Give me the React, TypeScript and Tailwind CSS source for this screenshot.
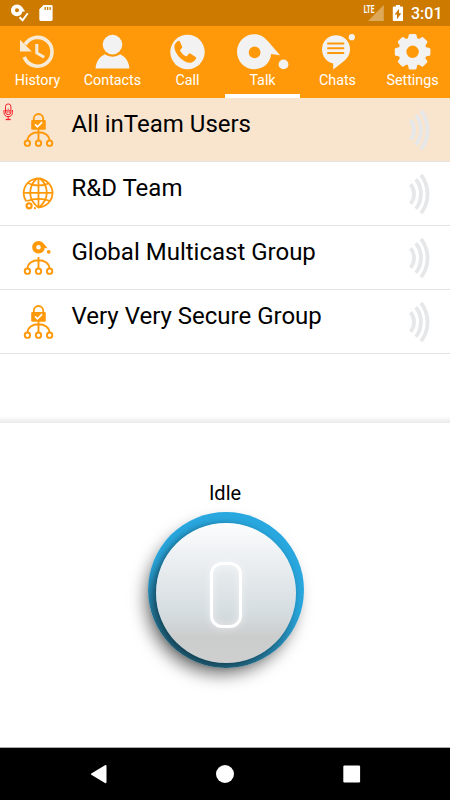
import type { ReactNode } from "react";
import clsx from "clsx";

const TABS = [
  { label: "History", icon: <HistoryIcon /> },
  { label: "Contacts", icon: <ContactsIcon /> },
  { label: "Call", icon: <CallIcon /> },
  { label: "Talk", icon: <TalkIcon /> },
  { label: "Chats", icon: <ChatsIcon /> },
  { label: "Settings", icon: <SettingsIcon /> },
];

type GroupKind = "secure" | "global" | "multicast";

const GROUPS: { name: string; kind: GroupKind }[] = [
  { name: "All inTeam Users", kind: "secure" },
  { name: "R&D Team", kind: "global" },
  { name: "Global Multicast Group", kind: "multicast" },
  { name: "Very Very Secure Group", kind: "secure" },
];

// Tab icons share a 75x46 canvas, the width of one tab
function TabSvg({ children }: { children: ReactNode }) {
  return (
    <svg width="75" height="46" viewBox="0 0 75 46" fill="#f2f2f2" className="block shrink-0">
      {children}
    </svg>
  );
}

function HistoryIcon() {
  return (
    <TabSvg>
      <g fill="none" stroke="#f7ead6" strokeWidth="3.6">
        <path d="M25.2 18.5A14.4 14.4 0 1 1 24.2 31" />
        <path d="M36.8 18v9l7.4 4.200" strokeWidth="3" />
      </g>
      <path d="M20 13.800v11.600h11.800z" fill="#f7ead6" />
    </TabSvg>
  );
}

function ContactsIcon() {
  return (
    <TabSvg>
      <circle cx="37.5" cy="18.6" r="9.8" />
      <path d="M20.6 42.500c.4-6.400 3.400-11.400 9.200-14.200 4.900 3.100 10.600 3.100 15.400 0 5.800 2.800 8.800 7.800 9.200 14.200z" />
    </TabSvg>
  );
}

function CallIcon() {
  return (
    <TabSvg>
      <circle cx="37.5" cy="26" r="17.2" />
      <path
        fill="#ff9909"
        d="M28.7 14.8c-1.200.3-3.700 2.400-4.200 4.500-.8 3.300 1.500 8.400 5.100 12.100 3.600 3.600 8.500 6.100 12 5.100 2-.5 4.100-3 4.500-4.300.1-.5-.1-.9-.5-1.200l-5.300-3.400c-.5-.3-1.100-.2-1.500.2l-1.800 2.100c-.4.4-1 .5-1.500.2-2-1.100-3.900-3-5.200-5.100-.3-.5-.2-1 .2-1.400l1.400-1.700c.4-.4.5-1 .2-1.500l-2.300-5.100c-.2-.4-.6-.6-1.100-.5z"
      />
    </TabSvg>
  );
}

function TalkIcon() {
  return (
    <TabSvg>
      <path
        fillRule="evenodd"
        d="M29.2 8.200c6 0 10 2.700 13.300 6.600L55 29.200l-8.900-1.100C45.400 37 38.400 43.200 29.400 43.200 19.700 43.200 12 35.500 12 25.700S19.700 8.200 29.200 8.200zm.4 12.200a5.900 5.900 0 1 0 0 11.800 5.900 5.900 0 0 0 0-11.800z"
      />
      <circle cx="58.5" cy="38.4" r="4.9" />
    </TabSvg>
  );
}

function ChatsIcon() {
  return (
    <TabSvg>
      <path d="M36 9.200a14 14 0 0 1 14 14c0 5.400-2.800 9.300-6.600 12.300L33.200 43.500v-6.100C26.500 36.100 22 30.200 22 23.200a14 14 0 0 1 14-14z" />
      <circle cx="51.8" cy="11.200" r="3.100" />
      <path d="M28 17.600h15.400M28 22.300h15.400M28 27h15.400" stroke="#ff9909" strokeWidth="2" strokeLinecap="round" />
    </TabSvg>
  );
}

function SettingsIcon() {
  return (
    <TabSvg>
      <g transform="translate(37.6 25.8)">
        {[0, 45, 90, 135, 180, 225, 270, 315].map((deg) => (
          <path
            key={deg}
            transform={`rotate(${deg})`}
            d="M-5-11.500-3.900-16.800q.3-1 1.300-1h5.200q1 0 1.300 1L5-11.500z"
          />
        ))}
        <circle r="10.2" fill="none" stroke="#f2f2f2" strokeWidth="8" />
      </g>
    </TabSvg>
  );
}

// Tree with three leaves that hangs under the lock and the talk mark
function Branches() {
  return (
    <g fill="none" stroke="#ff9909" strokeWidth="1.9">
      <path d="M16.5 17v11.400M5.500 28.400C5.800 23.600 10.200 20.200 16.500 20.200s10.700 3.400 11 8.200" />
      <circle cx="5.400" cy="31.200" r="2.7" />
      <circle cx="16.5" cy="31.200" r="2.7" />
      <circle cx="27.600" cy="31.200" r="2.7" />
    </g>
  );
}

function GroupIcon({ kind }: { kind: GroupKind }) {
  return (
    <svg width="33" height="36" viewBox="0 0 33 36" fill="#ff9909" className="ml-[22px] mt-[14px] block shrink-0">
      {kind === "secure" && (
        <>
          <path d="M11.800 8.600V6.700a4.700 4.700 0 0 1 9.400 0v1.900" fill="none" stroke="#ff9909" strokeWidth="1.800" />
          <rect x="9.200" y="7.900" width="14.600" height="9.900" rx="1.100" />
          <path d="m13 12.300 2.500 2.500 4.600-4.600" fill="none" stroke="#fff" strokeWidth="1.700" />
          <Branches />
        </>
      )}
      {kind === "multicast" && (
        <>
          <path
            fillRule="evenodd"
            d="M16.400 1c2.600 0 4 1 5.200 2.600l4 4.600-2.900-.1c-.2 3.300-2.900 5.400-6.200 5.400A6.250 6.250 0 0 1 16.400 1zm.1 4a2.300 2.300 0 1 0 0 4.600 2.300 2.300 0 0 0 0-4.600z"
          />
          <circle cx="26.700" cy="11.800" r="1.900" />
          <Branches />
        </>
      )}
      {kind === "global" && (
        <>
          <g fill="none" stroke="#ff9909" strokeWidth="1.800">
            <path d="M4.400 25.400A14.400 14.400 0 1 1 17.500 31.300" />
            <path d="M16.500 2v29.600M2.200 16.800h28.800" />
            <path d="M15.200 2.200C9.600 6.800 8.200 11.300 8.200 16.800c0 5.800 2.400 10.600 8.300 14.600 5.900-4 8.300-8.800 8.300-14.600 0-5.500-1.400-10-7-14.600" />
            <path d="M6.200 7c5 3.200 15.800 3.200 20.800 0M5.200 25c6.400-2.800 16.400-2.800 22.800 0" />
          </g>
          <circle cx="7.100" cy="29.800" r="2.500" fill="none" stroke="#ff9909" strokeWidth="2.200" />
          <circle cx="12.900" cy="32.200" r="1.100" />
        </>
      )}
    </svg>
  );
}

function MicIcon() {
  return (
    <svg width="10" height="18" viewBox="0 0 10 18" fill="none" stroke="#f5202c" className="absolute left-[3px] top-[5px]">
      <rect x="2.500" y=".9" width="5.400" height="10.800" rx="2.700" strokeWidth="1" />
      <path d="M1 7v2.500c0 2.800 1.600 4.100 4.200 4.100s4.200-1.300 4.200-4.100V7M5.200 13.600v2.700" strokeWidth="1" />
      <path d="M2.700 16.500h5" strokeWidth="1.300" />
      <path d="M2.500 7.500h1.700v2.600M7.900 7.500H6.200v2.600M5.200 5.500v3" strokeWidth=".8" />
    </svg>
  );
}

function WavesIcon() {
  return (
    <svg
      width="24"
      height="44"
      viewBox="0 0 24 44"
      fill="none"
      stroke="#e6e7e9"
      strokeWidth="3.800"
      className="mr-[19px] mt-[10px] block shrink-0"
    >
      <path d="M3.600 12.300c4.600 5.600 4.600 13.800 0 19.400M8.800 7.300c6.900 8.200 6.900 21.200 0 29.400M14 2.800c8.700 11.200 8.700 27.200 0 38.400" />
    </svg>
  );
}

function StatusBar() {
  return (
    <div className="flex h-[26px] shrink-0 items-center bg-[#cc7a00] text-white">
      <svg width="60" height="26" viewBox="0 0 60 26" fill="#fff" className="block">
        <path
          fillRule="evenodd"
          d="M16.800 4.400c2.300 0 4 1 5.300 2.600l3 4.400-2.600.2a5.900 5.900 0 0 1-5.600 4.600 5.900 5.900 0 0 1-.1-11.800zm.2 3.900a2 2 0 1 0 0 4 2 2 0 0 0 0-4z"
        />
        <path d="m19.500 17.300 3.100 3 5.200-7" fill="none" stroke="#fff" strokeWidth="1.900" />
        <path
          fillRule="evenodd"
          d="M43.600 5h7.600q1.400 0 1.400 1.400v13.200q0 1.400-1.400 1.400H40.700q-1.400 0-1.400-1.400V9.300zm.9 2v3h1.300V7zm2.500 0v3h1.300V7zm2.500 0v3h1.300V7z"
        />
      </svg>
      <div className="flex-1" />
      <svg width="50" height="26" viewBox="0 0 50 26" className="block">
        <path d="M30.800 5v16H15z" fill="#fff" fillOpacity=".35" />
        <text
          x="10.700"
          y="12.700"
          fontFamily="Roboto"
          fontWeight="700"
          fontSize="10"
          textLength="10.700"
          lengthAdjust="spacingAndGlyphs"
          fill="#fff"
        >
          LTE
        </text>
        <path
          fillRule="evenodd"
          fill="#fff"
          d="M43 5v1.600h-2.200q-1 0-1 1V20q0 1 1 1h8.400q1 0 1-1V7.600q0-1-1-1H47V5zM46 8.700v4.500h2.300L44 19.300v-4.700h-2.300z"
        />
      </svg>
      <span className="ml-[8px] mr-[10px] w-[29px] whitespace-nowrap pt-px text-[16px] font-medium leading-[26px]">
        3:01
      </span>
    </div>
  );
}

function TalkButton() {
  return (
    <div className="ml-px mt-[7px] flex h-[156px] w-[156px] items-center justify-center rounded-full bg-[linear-gradient(200deg,#29a9e1_0%,#29a5db_48%,#226d8b_82%,#205568_100%)] shadow-[-5px_9px_16px_-2px_rgba(0,0,0,0.5)]">
      <div className="ml-px mt-[6px] flex h-[140px] w-[140px] items-center justify-center rounded-full bg-[linear-gradient(#fdfdfe_0%,#e9edf0_30%,#d5dce0_65%,#cbcccc_82%,#cfcfcf_100%)] shadow-[-3px_2px_7px_rgba(10,35,45,0.65)]">
        <div className="mt-[4px] h-[66px] w-[32px] rounded-[12px] border-[3px] border-white shadow-[0_0_8px_rgba(255,255,255,0.5),inset_0_0_8px_rgba(255,255,255,0.5)]" />
      </div>
    </div>
  );
}

export default function App() {
  return (
    <div className="flex h-[800px] w-[450px] flex-col overflow-hidden bg-white font-[Roboto,sans-serif] text-black">
      <StatusBar />

      <nav className="grid h-[72px] shrink-0 grid-cols-6 bg-[#ff9909] text-white">
        {TABS.map((tab) => (
          <div
            key={tab.label}
            className={clsx(
              "flex flex-col items-center border-b-4",
              tab.label === "Talk" ? "border-white" : "border-transparent",
            )}
          >
            {tab.icon}
            <span className="text-[14.3px] leading-[17px]">{tab.label}</span>
          </div>
        ))}
      </nav>

      <ul className="shrink-0">
        {GROUPS.map((group, i) => (
          <li
            key={group.name}
            className={clsx("relative flex h-16 items-start border-b border-[#e2e2e2]", i === 0 && "bg-[#f9e4cd]")}
          >
            {i === 0 && <MicIcon />}
            <GroupIcon kind={group.kind} />
            <span className="ml-[16.5px] flex-1 whitespace-nowrap pt-[12px] text-[24px] leading-[28px]">{group.name}</span>
            <WavesIcon />
          </li>
        ))}
      </ul>

      <div className="mt-[62px] h-[7px] shrink-0 bg-[linear-gradient(#ffffff,#e9e9e9)]" />

      <main className="flex flex-1 flex-col items-center pt-[58px]">
        <p className="text-[20px] leading-[24px]">Idle</p>
        <TalkButton />
      </main>

      <footer className="flex h-[53px] shrink-0 items-center border-t border-[#aaaaaa] bg-black">
        <svg width="450" height="52" viewBox="0 0 450 52" fill="#fff" className="block">
          <path d="M91.300 25.400 105 17.200q1.500-.8 1.500.9v15.900q0 1.700-1.500.9l-13.700-8.200q-.9-.6 0-1.300z" />
          <circle cx="225" cy="26" r="9" />
          <rect x="343.300" y="17.500" width="16.800" height="17" rx="1.200" />
        </svg>
      </footer>
    </div>
  );
}
